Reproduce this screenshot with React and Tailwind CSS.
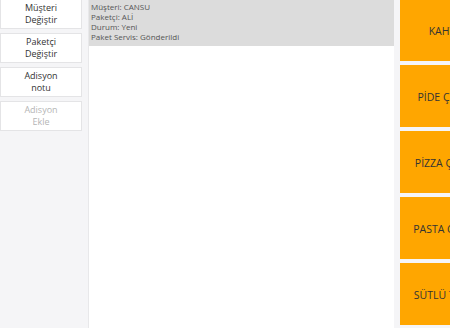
import React from 'react';

const actions = [
    { label: ['Müşteri', 'Değiştir'] },
    { label: ['Paketçi', 'Değiştir'] },
    { label: ['Adisyon', 'notu'] },
    { label: ['Adisyon', 'Ekle'], disabled: true },
];

const categories = ['KAHVELER', 'PİDE ÇEŞİTLERİ', 'PİZZA ÇEŞİTLERİ', 'PASTA ÇEŞİTLERİ', 'SÜTLÜ TATLILAR'];

export default function App() {
    return (
        <div className="flex h-[328px] w-[450px] overflow-hidden bg-[#f5f5f7] font-['Open_Sans',sans-serif]">
            {/* sol: islem butonlari */}
            <div className="-mt-px flex w-[88px] shrink-0 flex-col gap-[4px] pr-[6px]">
                {actions.map((a, i) => (
                    <button
                        key={i}
                        disabled={a.disabled}
                        className={`flex h-[30px] flex-col items-center justify-center border border-[#e4e4e6] bg-white text-[9px] leading-[12px] ${a.disabled ? 'text-[#b5b5b5]' : 'text-[#333]'}`}
                    >
                        <span>{a.label[0]}</span>
                        <span>{a.label[1]}</span>
                    </button>
                ))}
            </div>

            {/* orta: adisyon */}
            <div className="w-[306px] shrink-0 border-l border-[#e8e8ea] bg-white">
                <div className="h-[46px] bg-[#dcdcdc] pl-[2px] pt-[2px] text-[8px] leading-[10px] text-[#555]">
                    <div>Müşteri: CANSU</div>
                    <div>Paketçi: ALİ</div>
                    <div>Durum: Yeni</div>
                    <div>Paket Servis: Gönderildi</div>
                </div>
            </div>

            {/* sag: kategoriler */}
            <div className="ml-[6px] -mt-px flex w-[108px] shrink-0 flex-col gap-[4px]">
                {categories.map((c) => (
                    <div key={c} className="flex h-[62px] shrink-0 items-center justify-center bg-[#ffa600] pt-[3px] text-[10.5px] text-[#333] whitespace-nowrap">
                        {c}
                    </div>
                ))}
            </div>
        </div>
    );
}
